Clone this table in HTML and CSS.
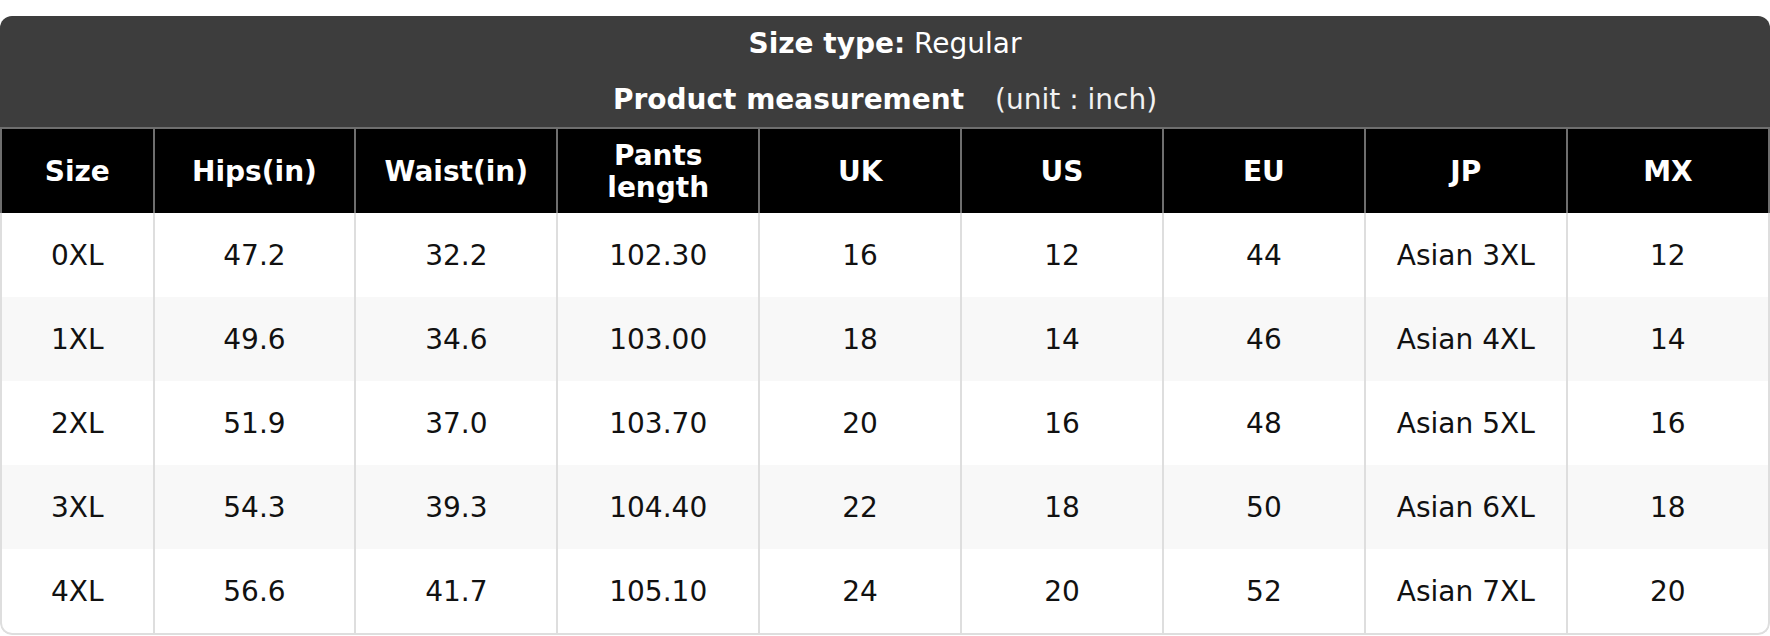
FILE: index.html
```html
<!DOCTYPE html>
<html lang="en">
<head>
<meta charset="utf-8">
<title>Size chart</title>
<link rel="stylesheet" href="styles.css">
</head>
<body>
<div class="page">
  <div class="chart">
    <div class="chart-head">
      <div class="head-line"><b>Size type:</b> Regular</div>
      <div class="head-line"><b>Product measurement</b><span class="unit">(unit : inch)</span></div>
    </div>
    <table class="size-table">
      <colgroup>
        <col class="col-size">
        <col class="col-std"><col class="col-std"><col class="col-std"><col class="col-std"><col class="col-std"><col class="col-std"><col class="col-std">
        <col>
      </colgroup>
      <thead>
        <tr>
          <th>Size</th>
          <th>Hips(in)</th>
          <th>Waist(in)</th>
          <th>Pants<br>length</th>
          <th>UK</th>
          <th>US</th>
          <th>EU</th>
          <th>JP</th>
          <th>MX</th>
        </tr>
      </thead>
      <tbody>
        <tr><td>0XL</td><td>47.2</td><td>32.2</td><td>102.30</td><td>16</td><td>12</td><td>44</td><td>Asian 3XL</td><td>12</td></tr>
        <tr><td>1XL</td><td>49.6</td><td>34.6</td><td>103.00</td><td>18</td><td>14</td><td>46</td><td>Asian 4XL</td><td>14</td></tr>
        <tr><td>2XL</td><td>51.9</td><td>37.0</td><td>103.70</td><td>20</td><td>16</td><td>48</td><td>Asian 5XL</td><td>16</td></tr>
        <tr><td>3XL</td><td>54.3</td><td>39.3</td><td>104.40</td><td>22</td><td>18</td><td>50</td><td>Asian 6XL</td><td>18</td></tr>
        <tr><td>4XL</td><td>56.6</td><td>41.7</td><td>105.10</td><td>24</td><td>20</td><td>52</td><td>Asian 7XL</td><td>20</td></tr>
      </tbody>
    </table>
  </div>
</div>
</body>
</html>
```
FILE: styles.css
```css
html, body {
  margin: 0;
  padding: 0;
  background: #ffffff;
}

.page {
  padding-top: 16px;
  font-family: "DejaVu Sans", "Liberation Sans", sans-serif;
  font-size: 28px;
}

.chart {
  width: 1770px;
  border-radius: 12px;
  overflow: hidden;
}

.chart-head {
  background: #3d3d3d;
  color: #ffffff;
  text-align: center;
}

.head-line {
  height: 56px;
  line-height: 56px;
}

.head-line:last-child {
  height: 55px;
}

.head-line b {
  font-weight: bold;
}

.unit {
  margin-left: 31px;
  color: #f2f2f2;
}

.size-table {
  width: 100%;
  table-layout: fixed;
  border-collapse: separate;
  border-spacing: 0;
}

.col-size {
  width: 152.5px;
}

.col-std {
  width: 201.9px;
}

.size-table th {
  background: #000000;
  color: #ffffff;
  font-weight: bold;
  font-size: 28px;
  line-height: 31.5px;
  padding: 11px 6px 9.5px;
  height: 63px;
  text-align: center;
  vertical-align: middle;
  border-top: 2px solid #6e6e6e;
  border-left: 2px solid #6e6e6e;
}

.size-table th:last-child {
  border-right: 2px solid #6e6e6e;
}

.size-table td {
  color: #111111;
  text-align: center;
  vertical-align: middle;
  line-height: 42px;
  padding: 22px 6px 20px;
  border-left: 2px solid #dedede;
  background: #ffffff;
}

.size-table td:last-child {
  border-right: 2px solid #dedede;
}

.size-table tbody tr:nth-child(even) td {
  background: #f8f8f8;
}

.size-table tbody tr:last-child td {
  border-bottom: 2px solid #dedede;
}

.size-table tbody tr:last-child td:first-child {
  border-bottom-left-radius: 12px;
}

.size-table tbody tr:last-child td:last-child {
  border-bottom-right-radius: 12px;
}
```
